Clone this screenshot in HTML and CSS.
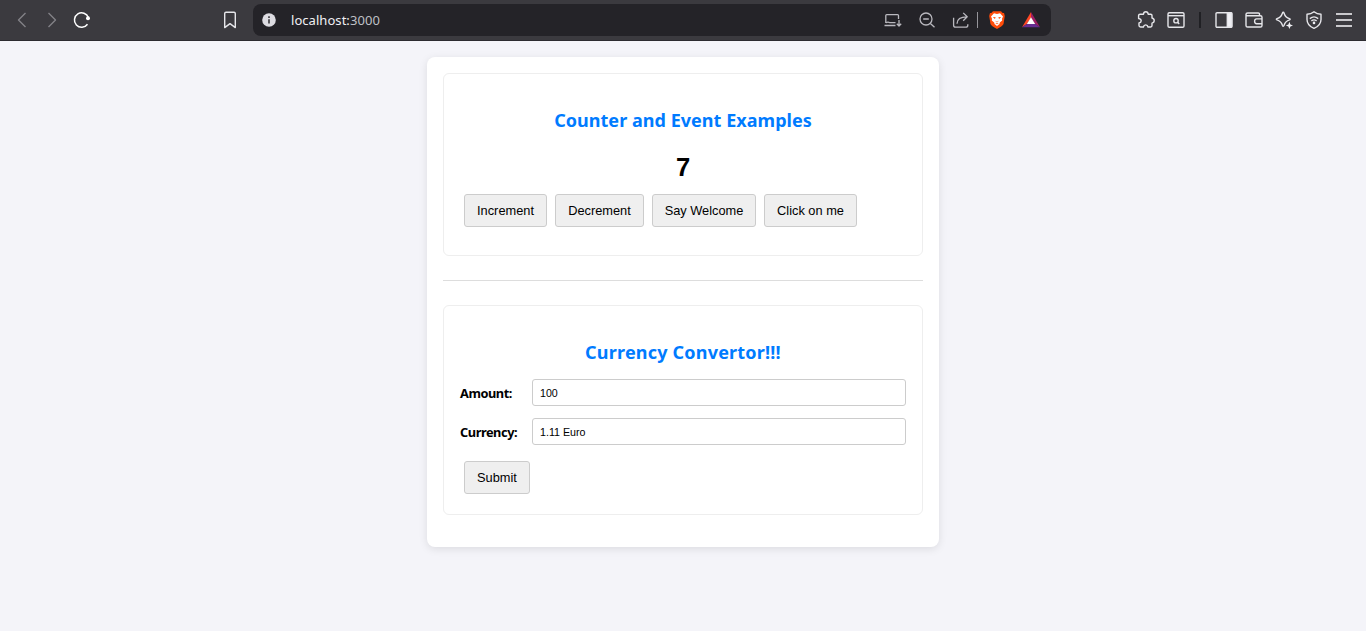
FILE: index.html
```html
<!DOCTYPE html>
<html lang="en">
<head>
<meta charset="utf-8">
<title>Counter and Currency Convertor</title>
<link rel="stylesheet" href="styles.css">
</head>
<body>
<header class="toolbar">
  <nav class="nav">
    <svg class="icon dim" viewBox="0 0 20 20"><path d="M13.5 3 L6.5 10 L13.5 17"/></svg>
    <svg class="icon dim" viewBox="0 0 20 20"><path d="M6.5 3 L13.5 10 L6.5 17"/></svg>
    <svg class="icon reload" viewBox="0 0 20 20"><path d="M15.5 14.3 A7.2 7.2 0 1 1 16.4 7.6"/><circle class="dot" cx="16" cy="8.3" r="2"/></svg>
  </nav>
  <svg class="icon bookmark" viewBox="0 0 20 20"><path d="M4.7 3.5 Q4.7 2.2 6 2.2 H14 Q15.3 2.2 15.3 3.5 V17.6 L10 13.6 L4.7 17.6 Z"/></svg>
  <div class="address">
    <svg class="icon" viewBox="0 0 20 20"><circle class="info" cx="10" cy="10" r="6.8"/><path class="info-mark" d="M10 9.3 V13.6 M10 6.3 V8"/></svg>
    <span class="url"><span class="host">localhost:</span>3000</span>
    <div class="actions">
      <svg class="icon soft" viewBox="0 0 20 20"><path d="M2.8 13 V5.6 Q2.8 4.7 3.7 4.7 H14.6 Q15.5 4.7 15.5 5.6 V9"/><path d="M2.8 12.7 Q5 11.6 7 12.7 H12.5 M1.5 15.5 H12.5"/><path d="M16 10 V15.8 M13.8 13.8 L16 16 L18.2 13.8"/></svg>
      <svg class="icon soft" viewBox="0 0 20 20"><circle cx="9" cy="9" r="6"/><path d="M6.2 9 H11.8 M13.4 13.4 L17.5 17.2"/></svg>
      <svg class="icon soft" viewBox="0 0 20 20"><path d="M2.6 7.7 V15.2 Q2.6 17.2 4.6 17.2 H14.8 Q16.8 17.2 16.8 15.2 V14.2"/><path d="M6 13.8 Q6 6.8 16 6.8 M12.2 2.9 L16.2 6.8 L12.2 10.7"/></svg>
      <i class="divider"></i>
      <svg class="icon brave" viewBox="0 0 20 20"><path fill="#ff4c0a" d="M6 1.2 H14 L15.7 3 L17 3.1 L17.8 6 L16.5 14 Q15.8 15.8 10 19.1 Q4.2 15.8 3.5 14 L2.2 6 L3 3.1 L4.3 3 Z"/><path fill="#fff" d="M7 3.3 L10 3.9 L13 3.3 L16 6.5 L15 8.7 L15.2 10.5 L12.8 12.6 L12.5 13.9 L10 15.9 L7.5 13.9 L7.2 12.6 L4.8 10.5 L5 8.7 L4 6.5 Z"/><path fill="#ff4c0a" d="M5.8 6.9 L8.7 7.3 L7.9 8.9 Z M14.2 6.9 L11.3 7.3 L12.1 8.9 Z M7.8 10.6 L10 11.7 L12.2 10.6 L10 12.6 Z M8.3 13.2 H11.7 L10 14.3 Z"/></svg>
      <svg class="icon bat" viewBox="0 0 20 20"><path fill="#ff4724" d="M10 2 V8 L5.8 14 L1 17.2 Z"/><path fill="#9e1f63" d="M10 2 L19 17.2 L14.2 14 L10 8 Z"/><path fill="#662d91" d="M1 17.2 L5.8 14 H14.2 L19 17.2 Z"/><path fill="#fff" d="M10 7.3 L14.2 14.1 H5.8 Z"/></svg>
    </div>
  </div>
  <div class="extensions">
    <svg class="icon" viewBox="0 0 20 20"><path d="M4 4.2 H7.5 Q7.6 1.7 9.8 1.7 Q12 1.7 12.2 4.2 H14.7 Q16 4.2 16 5.5 V8 Q18.2 8.5 18.2 10.6 Q18.2 12.7 16 13.1 V15.6 Q16 17 14.7 17 H12 Q11.6 14.9 9.7 14.9 Q7.8 14.9 7.4 17 H4.6 Q3 17 3 15.6 V13 Q5.2 12.6 5.2 10.8 Q5.2 9 2.6 8.5 V5.5 Q2.6 4.2 4 4.2 Z"/></svg>
    <svg class="icon" viewBox="0 0 20 20"><rect x="2" y="2.7" width="16" height="14.6" rx="1.3"/><path d="M2 5.7 H18"/><circle cx="10" cy="10.7" r="2.2"/><path d="M11.7 12.3 L13.2 13.9"/></svg>
    <i class="bar"></i>
    <svg class="icon" viewBox="0 0 20 20"><rect x="2" y="2.7" width="16" height="14.6" rx="1"/><path class="solid" d="M13.3 3 H17.5 V17 H13.3 Z"/></svg>
    <svg class="icon" viewBox="0 0 20 20"><path d="M15.5 5.8 V4 Q15.5 3 14.3 3 H3.6 Q2 3 2 4.4 V15.4 Q2 17 3.6 17 H16.4 Q18 17 18 15.4 V7.3 Q18 5.8 16.4 5.8 H3.4 Q2 5.8 2 4.4"/><path d="M18 8.9 H12.6 Q10.6 8.9 10.6 11.3 Q10.6 13.7 12.6 13.7 H18"/></svg>
    <svg class="icon" viewBox="0 0 20 20"><path d="M9.2 2.2 Q9.8 2.2 10.1 3.2 Q11.3 7.4 15.5 8.7 Q16.8 9.2 15.5 9.8 Q11.3 11.1 10.1 15.2 Q9.2 17.3 8.4 15.2 Q7.1 11.1 3 9.8 Q1.7 9.2 3 8.7 Q7.1 7.4 8.4 3.2 Q8.7 2.2 9.2 2.2 Z"/><path class="spark" d="M15.4 11.8 L16.4 14.4 L19 15.4 L16.4 16.4 L15.4 19 L14.4 16.4 L11.8 15.4 L14.4 14.4 Z"/></svg>
    <svg class="icon" viewBox="0 0 20 20"><path d="M10 1.7 Q13 4.1 17 4.3 V9.5 Q17 15.4 10 18.4 Q3 15.4 3 9.5 V4.3 Q7 4.1 10 1.7 Z"/><path d="M5.8 8.6 Q10 5.2 14.2 8.6 M7.4 10.9 Q10 8.9 12.6 10.9"/><circle class="spark" cx="10" cy="12.9" r="1.3"/></svg>
    <svg class="icon menu" viewBox="0 0 20 20"><path d="M2 4 H18 M2 10 H18 M2 16 H18"/></svg>
  </div>
</header>
<main class="card">
  <section class="panel counter">
    <h2 class="title">Counter and Event Examples</h2>
    <div class="count">7</div>
    <div class="buttons">
      <button class="button increment">Increment</button>
      <button class="button decrement">Decrement</button>
      <button class="button welcome">Say Welcome</button>
      <button class="button click">Click on me</button>
    </div>
  </section>
  <hr class="rule">
  <section class="panel convertor">
    <h2 class="title loose">Currency Convertor!!!</h2>
    <form class="form">
      <div class="field"><label class="label" for="amount">Amount:</label><input class="input" id="amount" type="text" value="100"></div>
      <div class="field"><label class="label" for="currency">Currency:</label><input class="input" id="currency" type="text" value="1.11 Euro"></div>
      <button class="button submit" type="button">Submit</button>
    </form>
  </section>
</main>
</body>
</html>
```
FILE: styles.css
```css
* { box-sizing: border-box; }
body {
  margin: 0;
  min-height: 631px;
  background: #f4f4f9;
  color: #000;
  font-family: "Segoe UI", "Noto Sans", "Open Sans", sans-serif;
}
.toolbar {
  display: flex;
  align-items: center;
  height: 41px;
  padding: 0 12px 1px;
  background: #3b3a3f;
  border-bottom: 1px solid #2c2b30;
}
.icon {
  display: block;
  flex: none;
  width: 20px;
  height: 20px;
  fill: none;
  stroke: #e6e6ea;
  stroke-width: 1.4;
  stroke-linejoin: round;
}
.dim { stroke: #828187; }
.soft { stroke: #b9b8be; stroke-width: 1.3; }
.reload { stroke: #fff; stroke-width: 1.5; }
.dot { fill: #fff; stroke: none; }
.solid { fill: #f0f0f4; }
.spark { fill: #f0f0f4; stroke: none; }
.info { fill: #dddce2; stroke: none; }
.info-mark { stroke: #48474c; stroke-width: 1.8; }
.menu { stroke: #c9c8cc; stroke-width: 2; }
.brave, .bat { stroke: none; }
.nav { display: flex; gap: 10px; }
.bookmark { margin-left: 128px; }
.address {
  display: flex;
  align-items: center;
  width: 798px;
  height: 32px;
  margin-left: 13px;
  padding: 0 10px 0 6px;
  border-radius: 8px;
  background: #242328;
}
.url {
  margin-left: 12px;
  color: #bfc0c6;
  font-size: 13px;
  letter-spacing: 0.05px;
  line-height: 18px;
  white-space: nowrap;
}
.host { color: #f0f0f4; }
.actions {
  display: flex;
  align-items: center;
  gap: 14px;
  margin-left: auto;
}
.divider {
  width: 1px;
  height: 16px;
  margin: 0 -5px 0 -8px;
  background: #96959b;
}
.extensions {
  display: flex;
  align-items: center;
  gap: 10px;
  margin-left: auto;
}
.bar { width: 2px; height: 16px; margin: 0 3px; background: #202024; }
.card {
  width: 512px;
  height: 490px;
  margin: 16px auto 0;
  padding: 16px;
  border-radius: 8px;
  background: #fff;
  box-shadow: 0 2px 8px rgba(0, 0, 0, 0.1);
}
.panel { padding: 0 16px; border: 1px solid #eee; border-radius: 6px; }
.counter { height: 183px; padding-top: 32px; }
.convertor { height: 210px; padding-top: 32px; }
.title {
  margin: 0;
  color: #007bff;
  font-size: 18px;
  font-weight: 700;
  letter-spacing: 0.04px;
  line-height: 28px;
  text-align: center;
}
.loose { letter-spacing: 0.2px; }
.count {
  margin-top: 15px;
  font-family: "Liberation Sans", Arial, sans-serif;
  font-size: 25.6px;
  font-weight: 700;
  line-height: 36px;
  text-align: center;
}
.buttons { display: flex; gap: 8px; margin: 9px 4px 0; }
.button {
  height: 33px;
  padding: 0;
  border: 1px solid #ccc;
  border-radius: 3px;
  background: #efefef;
  color: #000;
  font-family: "Liberation Sans", Arial, sans-serif;
  font-size: 12.8px;
}
.increment { width: 83px; }
.decrement { width: 89px; }
.welcome { width: 104px; }
.click { width: 93px; }
.rule { height: 1px; margin: 24px 0; border: 0; background: #ddd; }
.form { padding-top: 13px; }
.field { display: flex; align-items: center; height: 27px; margin-bottom: 12px; }
.label {
  width: 72px;
  font-size: 12.8px;
  font-weight: 700;
  letter-spacing: -0.45px;
  white-space: nowrap;
}
.input {
  width: 374px;
  height: 27px;
  padding: 0 7px;
  border: 1px solid #ccc;
  border-radius: 3px;
  background: #fff;
  color: #000;
  font-family: "Liberation Sans", Arial, sans-serif;
  font-size: 10.67px;
}
.submit { width: 66px; margin: 4px 0 0 4px; }
```
